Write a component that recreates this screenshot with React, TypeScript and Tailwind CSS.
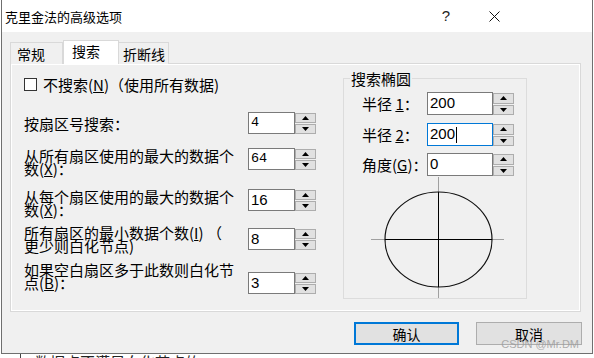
import React from "react";

const cjk = "font-['Noto_Sans_CJK_SC','Noto_Sans',sans-serif]";

const Arrow = ({ up }: { up?: boolean }) => (
  <svg width="7" height="4" viewBox="0 0 7 4">
    <polygon points={up ? "3.5,0 7,4 0,4" : "0,0 7,0 3.5,4"} fill="#000" />
  </svg>
);

type SpinProps = {
  value: string;
  inputClass: string;
  btnClass: string;
  focused?: boolean;
  mono?: boolean;
};

const Spin = ({ value, inputClass, btnClass, focused, mono }: SpinProps) => (
  <div className="flex">
    <div
      className={`flex items-center bg-white border pl-[2px] text-black ${
        focused ? "border-[#0078d7]" : "border-[#7a7a7a]"
      } ${mono ? "font-['Liberation_Mono',monospace] text-[13.5px]" : "font-['Liberation_Sans',sans-serif] text-[15px]"} ${inputClass}`}
    >
      {value}
      {focused && <span className="ml-px h-[16px] w-px bg-black" />}
    </div>
    <div className={`flex w-[21px] flex-col gap-px bg-[#f0f0f0] pt-px ${btnClass}`}>
      <div className="flex flex-1 items-center justify-center border border-[#adadad] bg-[#e1e1e1]">
        <Arrow up />
      </div>
      <div className="flex flex-1 items-center justify-center border border-[#adadad] bg-[#e1e1e1]">
        <Arrow />
      </div>
    </div>
  </div>
);

const U = ({ children }: { children: React.ReactNode }) => (
  <u className="underline underline-offset-1">{children}</u>
);

const leftSpin = (v: string, mono?: boolean) => (
  <Spin value={v} mono={mono} inputClass="h-[22px] w-[47px]" btnClass="h-[22px]" />
);

const rightSpin = (v: string, focused?: boolean) => (
  <Spin value={v} focused={focused} inputClass="h-[23px] w-[66px]" btnClass="h-[23px]" />
);

const TwoLine = ({ a, b }: { a: React.ReactNode; b: React.ReactNode }) => (
  <div className="flex flex-col">
    <div className="h-[13px] whitespace-nowrap leading-[13px]">{a}</div>
    <div className="h-[13px] whitespace-nowrap leading-[13px]">{b}</div>
  </div>
);

export default function App() {
  return (
    <div className={`flex h-[358px] w-[594px] flex-col overflow-hidden bg-white text-black ${cjk}`}>
      <div className="ml-px flex h-[354px] w-[592px] shrink-0 flex-col border-x border-b border-[#6f6f6f] bg-[#f0f0f0]">
        {/* title bar */}
        <div className="flex h-[32px] shrink-0 items-center bg-white pl-[3px]">
          <span className="text-[13px] leading-none">克里金法的高级选项</span>
          <div className="ml-auto mr-[75px] flex">
            <div className="flex w-[46px] justify-center pr-[4px] font-['Liberation_Sans',sans-serif] text-[15px] font-light text-[#222]">
              ?
            </div>
            <div className="flex w-[46px] items-center justify-center">
              <svg width="11" height="11" viewBox="0 0 11 11">
                <path d="M0.5 0.5 L10.5 10.5 M10.5 0.5 L0.5 10.5" stroke="#111" strokeWidth="1" fill="none" />
              </svg>
            </div>
          </div>
        </div>

        {/* tabs */}
        <div className="relative z-10 -mb-px ml-[8px] mt-[8px] flex h-[24px] items-end text-[14px]">
          <div className="flex h-[22px] w-[53px] items-center border border-b-0 border-[#d9d9d9] bg-[#f0f0f0] pl-[6px] pt-px">
            常规
          </div>
          <div className="flex h-[24px] w-[56px] items-center border border-b-0 border-[#d9d9d9] bg-white pb-[2px] pl-[8px]">
            搜索
          </div>
          <div className="flex h-[22px] w-[50px] items-center border border-b-0 border-l-0 border-[#d9d9d9] bg-[#f0f0f0] pl-[4px] pt-px">
            折断线
          </div>
        </div>

        {/* panel */}
        <div className="ml-[8px] flex h-[249px] w-[571px] border border-[#d9d9d9] pl-[13px] text-[15px] shadow-[inset_1px_1px_0_#fff,inset_-1px_-1px_0_#fff]">
          <div className="flex w-[292px] flex-col pt-[12px]">
            <div className="flex h-[16px] items-center">
              <div className="h-[13px] w-[13px] border border-[#333] bg-white" />
              <span className="ml-[6px] leading-none">
                不搜索(<U>N</U>)（使用所有数据)
              </span>
            </div>

            <div className="mt-[20px] flex h-[22px] items-center justify-between">
              <span className="leading-none">按扇区号搜索：</span>
              {leftSpin("4", true)}
            </div>

            <div className="mt-[14px] flex items-start justify-between">
              <div className="mt-px">
                <TwoLine a="从所有扇区使用的最大的数据个" b={<>数(<U>X</U>)：</>} />
              </div>
              {leftSpin("64", true)}
            </div>

            <div className="mt-[14px] flex items-start justify-between">
              <div className="mt-px">
                <TwoLine a="从每个扇区使用的最大的数据个" b={<>数(<U>X</U>)：</>} />
              </div>
              {leftSpin("16")}
            </div>

            <div className="mt-[10px] flex items-start justify-between">
              <TwoLine a={<>所有扇区的最小数据个数(<U>I</U>) （</>} b="更少则白化节点)" />
              <div className="mt-[2px]">{leftSpin("8")}</div>
            </div>

            <div className="mt-[11px] flex items-start justify-between">
              <TwoLine a="如果空白扇区多于此数则白化节" b={<>点(<U>B</U>)：</>} />
              <div className="mt-[9px]">{leftSpin("3")}</div>
            </div>
          </div>

          {/* group box */}
          <div className="ml-[27px] mt-[14px] flex h-[221px] w-[184px] flex-col border border-[#dcdcdc]">
            <span className="-mt-[8px] ml-[6px] w-fit bg-[#f0f0f0] px-px leading-[15px]">搜索椭圆</span>

            <div className="mt-[6px] flex items-center pl-[18px]">
              <span className="w-[65px] whitespace-nowrap leading-none">
                半径&nbsp;<U>1</U>：
              </span>
              {rightSpin("200")}
            </div>
            <div className="mt-[8px] flex items-center pl-[18px]">
              <span className="w-[65px] whitespace-nowrap leading-none">
                半径&nbsp;<U>2</U>：
              </span>
              {rightSpin("200", true)}
            </div>
            <div className="mt-[7px] flex items-center pl-[18px]">
              <span className="w-[65px] whitespace-nowrap leading-none">
                角度(<U>G</U>)：
              </span>
              {rightSpin("0")}
            </div>

            <svg className="mt-px" width="182" height="121" viewBox="0 0 182 121">
              <line x1="94.5" y1="0" x2="94.5" y2="121" stroke="#a0a0a0" strokeWidth="1" />
              <line x1="27" y1="62.5" x2="160" y2="62.5" stroke="#a0a0a0" strokeWidth="1" />
              <ellipse cx="94.5" cy="62.5" rx="53.5" ry="47.5" fill="none" stroke="#111" strokeWidth="1.2" />
              <line x1="94.5" y1="15" x2="94.5" y2="110" stroke="#000" strokeWidth="1" />
              <line x1="41" y1="62.5" x2="148" y2="62.5" stroke="#000" strokeWidth="1" />
            </svg>
          </div>
        </div>

        {/* buttons */}
        <div className="relative mt-[10px] flex justify-end gap-[17px] pr-[10px] text-[14px]">
          <button className="flex h-[23px] w-[105px] items-center justify-center border-2 border-[#0078d7] bg-[#e1e1e1] leading-none">
            确认
          </button>
          <button className="flex h-[23px] w-[106px] items-center justify-center border border-[#adadad] bg-[#e1e1e1] leading-none">
            取消
          </button>
          <span className="absolute right-[13px] top-[17px] font-['Liberation_Sans',sans-serif] text-[11px] leading-none text-[#9a9a9a]/80">
            CSDN @Mr.DM
          </span>
        </div>
      </div>

      {/* remnant of the window behind */}
      <div className="flex h-[4px] shrink-0 overflow-hidden">
        <div className="ml-[20px] h-full w-px bg-[#444]" />
        <span className="ml-[14px] text-[15px] leading-[15px] text-[#222]">数据点不满足白化节点的</span>
      </div>
    </div>
  );
}
